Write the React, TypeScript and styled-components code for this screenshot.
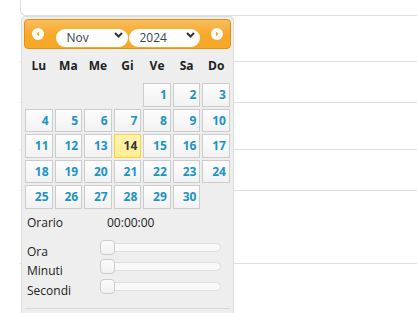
import styled, { createGlobalStyle } from "styled-components";

const GlobalStyle = createGlobalStyle`
  body {
    margin: 0;
    background: #fff;
    overflow: hidden;
    font-family: "Open Sans", "Liberation Sans", sans-serif;
  }
`;

const weekDays = ["Lu", "Ma", "Me", "Gi", "Ve", "Sa", "Do"];
const days = Array.from({ length: 30 }, (_, i) => i + 1);
const firstColumn = 5; // 1 Nov 2024 is a Friday
const today = 14;
const rowHeights = [45, 40, 46, 40, 72, 60];
const sliders = ["Ora", "Minuti", "Secondi"];

const Page = styled.div`
  position: relative;
  width: 417px;
  height: 313px;
  overflow: hidden;
`;

const TopCard = styled.div`
  margin-left: 20px;
  width: 420px;
  height: 15px;
  border: 1px solid #dcdfe3;
  border-top: none;
  border-radius: 0 0 6px 6px;
`;

const Rows = styled.div`
  margin-left: 20px;
  display: flex;
  flex-direction: column;
`;

const Row = styled.div<{ $h: number }>`
  height: ${(p) => p.$h}px;
  border-bottom: 1px solid #dcdfe3;
`;

const Picker = styled.div`
  position: absolute;
  top: 16px;
  left: 21px;
  width: 207px;
  height: 320px;
  padding: 2px 2px 0;
  background: #eee;
  border: 1px solid #ddd;
  border-radius: 4px 4px 0 0;
  color: #333;
`;

const Header = styled.div`
  height: 28px;
  border: 1px solid #e78f08;
  border-radius: 4px;
  background: linear-gradient(#f9bd5e, #f6a828 55%, #f6a828);
  display: flex;
  align-items: center;
  padding: 0 7px;
`;

const NavIcon = styled.svg`
  width: 12px;
  height: 12px;
  flex: none;
`;

const Selects = styled.div`
  flex: 1;
  display: flex;
  justify-content: center;
  gap: 1px;
`;

const SelectWrap = styled.div<{ $w: number }>`
  position: relative;
  width: ${(p) => p.$w}px;
  height: 18px;
`;

const Select = styled.select`
  appearance: none;
  width: 100%;
  height: 18px;
  border: none;
  border-radius: 9px;
  background: #fff;
  padding: 0 0 0 11px;
  font-family: "Open Sans", "Liberation Sans", sans-serif;
  font-size: 12px;
  line-height: 18px;
  color: #3b4350;
  outline: none;
`;

const Chevron = styled.svg`
  position: absolute;
  right: 5px;
  top: 7px;
  width: 9px;
  height: 6px;
  pointer-events: none;
`;

const WeekRow = styled.div`
  height: 33px;
  display: grid;
  grid-template-columns: repeat(7, 1fr);
  column-gap: 2px;
  padding: 0 1px;
  align-items: center;
  font-size: 12px;
  font-weight: 700;
  color: #222;
  text-align: center;
`;

const DayGrid = styled.div`
  display: grid;
  grid-template-columns: repeat(7, 1fr);
  grid-auto-rows: 23.5px;
  gap: 2px;
  padding: 1px 1px 0;
`;

const Day = styled.a<{ $start?: number; $active?: boolean }>`
  grid-column-start: ${(p) => p.$start ?? "auto"};
  display: flex;
  align-items: center;
  justify-content: flex-end;
  padding-right: 3px;
  border: 1px solid ${(p) => (p.$active ? "#fed22f" : "#cccccc")};
  background: ${(p) =>
    p.$active
      ? "linear-gradient(#fff3b0, #ffed96)"
      : "linear-gradient(#fdfdfd, #f2f2f2)"};
  color: ${(p) => (p.$active ? "#363636" : "#1c94c4")};
  font-size: 12px;
  font-weight: 700;
  cursor: pointer;
`;

const TimeRow = styled.div`
  display: flex;
  align-items: center;
  height: 16px;
  margin: 6px 0 0 3px;
  font-size: 12px;
  color: #222;
`;

const TimeLabel = styled.div<{ $w: number }>`
  width: ${(p) => p.$w}px;
  flex: none;
`;

const SliderList = styled.div`
  margin: 13px 0 0 3px;
  display: grid;
  grid-auto-rows: 19.5px;
`;

const SliderRow = styled.div`
  display: flex;
  align-items: flex-start;
  font-size: 12px;
  line-height: 16px;
  color: #222;
`;

const Track = styled.div`
  position: relative;
  width: 119px;
  height: 7px;
  margin-top: -1px;
  border: 1px solid #dedede;
  border-radius: 5px;
  background: #f9f9f9;
`;

const Handle = styled.span`
  position: absolute;
  left: -1px;
  top: -4px;
  width: 13px;
  height: 13px;
  border: 1px solid #cccccc;
  border-radius: 4px;
  background: linear-gradient(#fbfbfb, #f1f1f1);
`;

const ButtonPane = styled.div`
  margin: 6px 1px 0;
  border-top: 1px solid #d8d8d8;
  height: 30px;
`;

const Nav = ({ dir }: { dir: "prev" | "next" }) => (
  <NavIcon viewBox="0 0 12 12">
    <circle cx="6" cy="6" r="6" fill="#fff" />
    {dir === "prev" ? (
      <path d="M7 3.5 L4.5 6 L7 8.5 Z" fill="#f6a828" />
    ) : (
      <path d="M5 3.5 L7.5 6 L5 8.5 Z" fill="#f6a828" />
    )}
  </NavIcon>
);

const ChevronDown = () => (
  <Chevron viewBox="0 0 9 6">
    <path d="M1 1 L4.5 4.5 L8 1" fill="none" stroke="#333" strokeWidth="2" />
  </Chevron>
);

export default function App() {
  return (
    <Page>
      <GlobalStyle />
      <TopCard />
      <Rows>
        {rowHeights.map((h, i) => (
          <Row key={i} $h={h} />
        ))}
      </Rows>

      <Picker>
        <Header>
          <Nav dir="prev" />
          <Selects>
            <SelectWrap $w={72}>
              <Select defaultValue="Nov">
                <option>Nov</option>
              </Select>
              <ChevronDown />
            </SelectWrap>
            <SelectWrap $w={71}>
              <Select defaultValue="2024">
                <option>2024</option>
              </Select>
              <ChevronDown />
            </SelectWrap>
          </Selects>
          <Nav dir="next" />
        </Header>

        <WeekRow>
          {weekDays.map((d) => (
            <span key={d}>{d}</span>
          ))}
        </WeekRow>

        <DayGrid>
          {days.map((d) => (
            <Day
              key={d}
              $start={d === 1 ? firstColumn : undefined}
              $active={d === today}
            >
              {d}
            </Day>
          ))}
        </DayGrid>

        <TimeRow>
          <TimeLabel $w={80}>Orario</TimeLabel>
          <span>00:00:00</span>
        </TimeRow>

        <SliderList>
          {sliders.map((s) => (
            <SliderRow key={s}>
              <TimeLabel $w={73}>{s}</TimeLabel>
              <Track>
                <Handle />
              </Track>
            </SliderRow>
          ))}
        </SliderList>

        <ButtonPane />
      </Picker>
    </Page>
  );
}
